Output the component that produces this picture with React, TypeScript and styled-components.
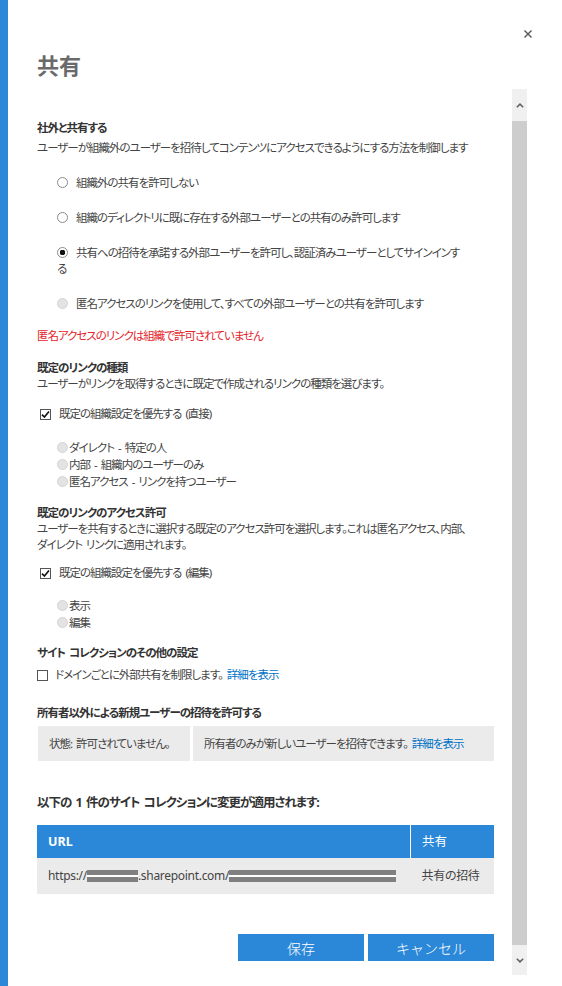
import React from "react";
import styled, { createGlobalStyle } from "styled-components";

const GlobalStyle = createGlobalStyle`
  html, body {
    margin: 0;
    padding: 0;
    background: #fff;
  }
  body {
    font-family: "Noto Sans", "Noto Sans CJK JP", sans-serif;
    font-size: 11.5px;
    line-height: 16px;
    letter-spacing: -1px;
    word-spacing: 2px;
    color: #444;
    font-feature-settings: "palt" 1;
  }
`;

const BLUE = "#2b88d8";

const Page = styled.div`
  display: flex;
  height: 986px;
  overflow: hidden;
`;

const AccentBar = styled.div`
  width: 8px;
  flex-shrink: 0;
  background: ${BLUE};
`;

const Dialog = styled.div`
  flex: 1;
  display: flex;
  flex-direction: column;
  min-width: 0;
`;

const Header = styled.div`
  height: 89px;
  display: flex;
  justify-content: space-between;
  align-items: flex-start;
  padding-left: 29px;
  flex-shrink: 0;
`;

const Title = styled.h1`
  margin: 50px 0 0;
  font-size: 22px;
  line-height: 30px;
  font-weight: 700;
  letter-spacing: 0;
  color: #6a6a6a;
`;

const CloseButton = styled.button`
  margin: 30px 30px 0 0;
  padding: 0;
  width: 8px;
  height: 8px;
  border: none;
  background: none;
  display: flex;
  cursor: pointer;
`;

const Body = styled.div`
  flex: 1;
  display: flex;
  align-items: flex-start;
`;

const Content = styled.div`
  width: 457px;
  padding: 31px 0 0 29px;
  flex-shrink: 0;
`;

const Scrollbar = styled.div`
  margin-left: 18px;
  width: 15px;
  height: 886px;
  display: flex;
  flex-direction: column;
  background: #f0f0f0;
`;

const ScrollArrow = styled.div<{ $h: number }>`
  height: ${(p) => p.$h}px;
  display: flex;
  align-items: center;
  justify-content: center;
  background: #f0f0f0;
`;

const ScrollThumb = styled.div`
  flex: 1;
  background: #cdcdcd;
`;

const SectionHeading = styled.div<{ $mt?: number }>`
  margin-top: ${(p) => p.$mt ?? 0}px;
  font-weight: 700;
  color: #333;
`;

const Description = styled.div<{ $mt?: number }>`
  margin-top: ${(p) => p.$mt ?? 0}px;
  color: #444;
  white-space: nowrap;
`;

const RadioOption = styled.label`
  display: block;
  margin-top: 19px;
  padding-left: 20px;
  color: #444;
  white-space: nowrap;
`;

const RadioMark = styled.span<{ $state: "off" | "on" | "disabled" }>`
  display: inline-block;
  box-sizing: border-box;
  width: 11px;
  height: 11px;
  border-radius: 50%;
  margin-right: 8px;
  vertical-align: -1px;
  border: 1px solid ${(p) => (p.$state === "disabled" ? "#d4d4d4" : "#8a8a8a")};
  background: ${(p) =>
    p.$state === "on"
      ? "radial-gradient(circle, #111 0 2.6px, #fff 3px)"
      : p.$state === "disabled"
      ? "#e3e3e3"
      : "#fff"};
`;

const ErrorText = styled.div`
  margin-top: 16px;
  color: #e3242b;
`;

const CheckRow = styled.label<{ $mt: number; $indent: number }>`
  display: flex;
  align-items: center;
  margin-top: ${(p) => p.$mt}px;
  padding-left: ${(p) => p.$indent}px;
  color: #444;
  white-space: pre;
`;

const CheckBox = styled.span<{ $gap: number }>`
  box-sizing: border-box;
  width: 11px;
  height: 11px;
  border: 1px solid #555;
  background: #fff;
  margin-right: ${(p) => p.$gap}px;
  display: flex;
  align-items: center;
  justify-content: center;
  flex-shrink: 0;
`;

const SubRadioList = styled.div<{ $mt: number }>`
  margin-top: ${(p) => p.$mt}px;
  padding-left: 20px;
  line-height: 17px;
`;

const SubRadio = styled.label`
  display: flex;
  align-items: center;
  color: #444;
  white-space: pre;
`;

const SubRadioMark = styled.span`
  box-sizing: border-box;
  width: 11px;
  height: 11px;
  border-radius: 50%;
  border: 1px solid #d4d4d4;
  background: #e3e3e3;
  margin-right: 1px;
  flex-shrink: 0;
`;

const Link = styled.a`
  color: #0072c6;
  text-decoration: none;
  margin-left: 4px;
`;

const StatusRow = styled.div`
  margin-top: 5px;
  display: flex;
  gap: 3px;
  padding-left: 1px;
`;

const StatusCell = styled.div<{ $width?: number }>`
  ${(p) => (p.$width ? `width: ${p.$width}px;` : "flex: 1;")}
  height: 35px;
  box-sizing: border-box;
  padding-left: 11px;
  display: flex;
  align-items: center;
  background: #ebebeb;
  color: #444;
  white-space: pre;
`;

const Summary = styled.div`
  margin-top: 34px;
  font-size: 12.5px;
  font-weight: 700;
  color: #333;
`;

const Table = styled.table`
  margin-top: 14px;
  width: 100%;
  border-collapse: collapse;
`;

const Th = styled.th<{ $bold?: boolean; $width?: number }>`
  height: 33px;
  padding: 0 0 0 11px;
  text-align: left;
  background: ${BLUE};
  color: #fff;
  font-size: 12.5px;
  letter-spacing: 0;
  font-weight: ${(p) => (p.$bold ? 700 : 400)};
  ${(p) => (p.$width ? `width: ${p.$width}px;` : "")}
  & + & {
    border-left: 1px solid #fff;
  }
`;

const Td = styled.td`
  height: 36px;
  padding: 0 0 0 11px;
  background: #ebebeb;
  color: #444;
  white-space: nowrap;
  font-size: 12px;
  letter-spacing: -0.3px;
`;

const Redacted = styled.span<{ $w: number }>`
  display: inline-block;
  width: ${(p) => p.$w}px;
  height: 12px;
  vertical-align: -2px;
  background: linear-gradient(#808080 0 5px, #fff 5px 7px, #808080 7px);
`;

const ButtonRow = styled.div`
  margin-top: 40px;
  display: flex;
  justify-content: flex-end;
  gap: 4px;
`;

const Button = styled.button`
  width: 126px;
  height: 27px;
  border: none;
  background: ${BLUE};
  color: #fff;
  font-family: inherit;
  font-size: 14px;
  font-weight: 300;
  letter-spacing: 0;
  cursor: pointer;
`;

const Check = () => (
  <svg width="9" height="9" viewBox="0 0 9 9">
    <path d="M1 4.6 L3.4 7 L8 1.4" fill="none" stroke="#111" strokeWidth="1.6" />
  </svg>
);

const Chevron = ({ up }: { up?: boolean }) => (
  <svg width="8" height="5" viewBox="0 0 8 5">
    <path
      d={up ? "M0.8 4.3 L4 1.1 L7.2 4.3" : "M0.8 0.7 L4 3.9 L7.2 0.7"}
      fill="none"
      stroke="#606060"
      strokeWidth="1.5"
    />
  </svg>
);

export default function App() {
  return (
    <Page>
      <GlobalStyle />
      <AccentBar />
      <Dialog>
        <Header>
          <Title>共有</Title>
          <CloseButton aria-label="閉じる">
            <svg width="8" height="8" viewBox="0 0 8 8">
              <path d="M0.5 0.5 L7.5 7.5 M7.5 0.5 L0.5 7.5" stroke="#555" strokeWidth="1.4" />
            </svg>
          </CloseButton>
        </Header>
        <Body>
          <Content>
            <SectionHeading>社外と共有する</SectionHeading>
            <Description $mt={4}>
              ユーザーが組織外のユーザーを招待してコンテンツにアクセスできるようにする方法を制御します
            </Description>
            <RadioOption>
              <RadioMark $state="off" />
              組織外の共有を許可しない
            </RadioOption>
            <RadioOption>
              <RadioMark $state="off" />
              組織のディレクトリに既に存在する外部ユーザーとの共有のみ許可します
            </RadioOption>
            <RadioOption>
              <RadioMark $state="on" />
              共有への招待を承諾する外部ユーザーを許可し、認証済みユーザーとしてサインインす
              <br />る
            </RadioOption>
            <RadioOption>
              <RadioMark $state="disabled" />
              匿名アクセスのリンクを使用して、すべての外部ユーザーとの共有を許可します
            </RadioOption>
            <ErrorText>匿名アクセスのリンクは組織で許可されていません</ErrorText>

            <SectionHeading $mt={16}>既定のリンクの種類</SectionHeading>
            <Description>
              ユーザーがリンクを取得するときに既定で作成されるリンクの種類を選びます。
            </Description>
            <CheckRow $mt={14} $indent={3}>
              <CheckBox $gap={8}>
                <Check />
              </CheckBox>
              既定の組織設定を優先する (直接)
            </CheckRow>
            <SubRadioList $mt={17}>
              <SubRadio>
                <SubRadioMark />
                ダイレクト - 特定の人
              </SubRadio>
              <SubRadio>
                <SubRadioMark />
                内部 - 組織内のユーザーのみ
              </SubRadio>
              <SubRadio>
                <SubRadioMark />
                匿名アクセス - リンクを持つユーザー
              </SubRadio>
            </SubRadioList>

            <SectionHeading $mt={15}>既定のリンクのアクセス許可</SectionHeading>
            <Description>
              ユーザーを共有するときに選択する既定のアクセス許可を選択します。これは匿名アクセス、内部、
              <br />
              ダイレクト リンクに適用されます。
            </Description>
            <CheckRow $mt={12} $indent={3}>
              <CheckBox $gap={8}>
                <Check />
              </CheckBox>
              既定の組織設定を優先する (編集)
            </CheckRow>
            <SubRadioList $mt={16}>
              <SubRadio>
                <SubRadioMark />
                表示
              </SubRadio>
              <SubRadio>
                <SubRadioMark />
                編集
              </SubRadio>
            </SubRadioList>

            <SectionHeading $mt={14}>サイト コレクションのその他の設定</SectionHeading>
            <CheckRow $mt={6} $indent={0}>
              <CheckBox $gap={7} />
              ドメインごとに外部共有を制限します。
              <Link href="#">詳細を表示</Link>
            </CheckRow>

            <SectionHeading $mt={22}>所有者以外による新規ユーザーの招待を許可する</SectionHeading>
            <StatusRow>
              <StatusCell $width={152}>状態: 許可されていません。</StatusCell>
              <StatusCell>
                所有者のみが新しいユーザーを招待できます。
                <Link href="#">詳細を表示</Link>
              </StatusCell>
            </StatusRow>

            <Summary>以下の 1 件のサイト コレクションに変更が適用されます:</Summary>
            <Table>
              <thead>
                <tr>
                  <Th $bold>URL</Th>
                  <Th $width={72}>共有</Th>
                </tr>
              </thead>
              <tbody>
                <tr>
                  <Td>
                    https://
                    <Redacted $w={51} />
                    .sharepoint.com/
                    <Redacted $w={167} />
                  </Td>
                  <Td>共有の招待</Td>
                </tr>
              </tbody>
            </Table>

            <ButtonRow>
              <Button>保存</Button>
              <Button>キャンセル</Button>
            </ButtonRow>
          </Content>
          <Scrollbar>
            <ScrollArrow $h={32}>
              <Chevron up />
            </ScrollArrow>
            <ScrollThumb />
            <ScrollArrow $h={30}>
              <Chevron />
            </ScrollArrow>
          </Scrollbar>
        </Body>
      </Dialog>
    </Page>
  );
}
